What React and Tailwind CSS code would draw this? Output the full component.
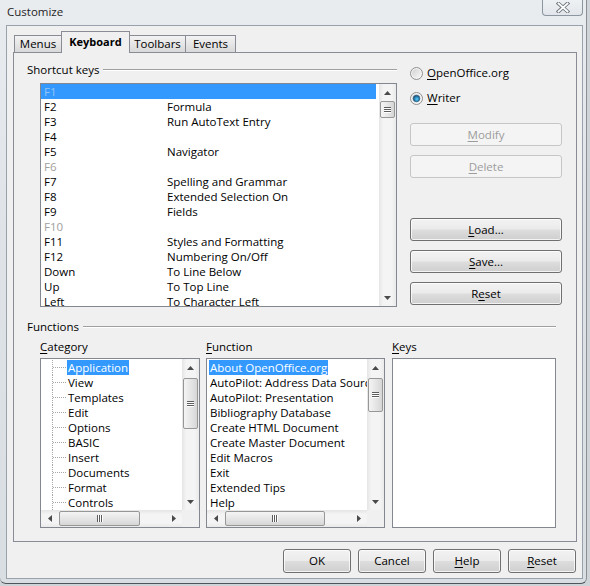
import React from "react";

const U = ({ children }) => <span className="underline decoration-1 underline-offset-[2px]">{children}</span>;

const Btn = ({ children, disabled, className = "" }) => (
  <div
    className={
      "flex items-center justify-center rounded-[3px] border leading-none " +
      (disabled
        ? "border-[#c4c6c8] bg-[#f4f4f4] text-[#9c9c9c] "
        : "border-[#707070] bg-[linear-gradient(to_bottom,#f2f2f2_0%,#ebebeb_48%,#dddddd_52%,#cfcfcf_100%)] shadow-[inset_0_0_0_1px_rgba(255,255,255,0.75)] ") +
      className
    }
  >
    {children}
  </div>
);

const TriUp = () => (
  <svg width="7" height="4" viewBox="0 0 7 4"><path d="M0 4 L3.5 0 L7 4 Z" fill="#4a4a4a" /></svg>
);
const TriDown = () => (
  <svg width="7" height="4" viewBox="0 0 7 4"><path d="M0 0 L3.5 4 L7 0 Z" fill="#4a4a4a" /></svg>
);
const TriLeft = () => (
  <svg width="4" height="7" viewBox="0 0 4 7"><path d="M4 0 L0 3.5 L4 7 Z" fill="#4a4a4a" /></svg>
);
const TriRight = () => (
  <svg width="4" height="7" viewBox="0 0 4 7"><path d="M0 0 L4 3.5 L0 7 Z" fill="#4a4a4a" /></svg>
);

const GripH = () => (
  <svg width="7" height="6" viewBox="0 0 7 6">
    <path d="M0 0.5H7M0 2.5H7M0 4.5H7" stroke="#5c5c5c" strokeWidth="1" />
    <path d="M0 1.5H7M0 3.5H7M0 5.5H7" stroke="#ffffff" strokeWidth="1" />
  </svg>
);
const GripV = () => (
  <svg width="6" height="7" viewBox="0 0 6 7">
    <path d="M0.5 0V7M2.5 0V7M4.5 0V7" stroke="#5c5c5c" strokeWidth="1" />
    <path d="M1.5 0V7M3.5 0V7M5.5 0V7" stroke="#ffffff" strokeWidth="1" />
  </svg>
);

const VScroll = ({ thumbTop, thumbH }) => (
  <div className="flex h-full w-[17px] shrink-0 flex-col bg-[linear-gradient(to_right,#e5e5e5,#f4f4f4_25%,#f4f4f4_75%,#eaeaea)]">
    <div className="flex h-[17px] items-center justify-center"><TriUp /></div>
    <div
      className="mx-[1px] flex items-center justify-center rounded-[2px] border border-[#979797] bg-[linear-gradient(to_right,#f4f4f4,#e6e6e6_50%,#d6d6d6)]"
      style={{ marginTop: thumbTop, height: thumbH }}
    >
      <GripH />
    </div>
    <div className="flex-1" />
    <div className="flex h-[17px] items-center justify-center"><TriDown /></div>
  </div>
);

const HScroll = ({ thumbW }) => (
  <div className="flex h-[17px] w-full flex-row bg-[linear-gradient(to_bottom,#e5e5e5,#f4f4f4_25%,#f4f4f4_75%,#eaeaea)]">
    <div className="flex w-[17px] items-center justify-center"><TriLeft /></div>
    <div
      className="my-[1px] ml-[1px] flex items-center justify-center rounded-[2px] border border-[#979797] bg-[linear-gradient(to_bottom,#f4f4f4,#e6e6e6_50%,#d6d6d6)]"
      style={{ width: thumbW }}
    >
      <GripV />
    </div>
    <div className="flex-1" />
    <div className="flex w-[17px] items-center justify-center"><TriRight /></div>
  </div>
);

const Radio = ({ checked }) => (
  <svg width="13" height="13" viewBox="0 0 13 13">
    <defs>
      <linearGradient id={checked ? "rgc" : "rgu"} x1="0" y1="0" x2="1" y2="1">
        <stop offset="0" stopColor="#d2d2d2" />
        <stop offset="1" stopColor="#f8f8f8" />
      </linearGradient>
      <radialGradient id="dot" cx="0.55" cy="0.6" r="0.6">
        <stop offset="0" stopColor="#5ed0f5" />
        <stop offset="0.5" stopColor="#2a8bc0" />
        <stop offset="1" stopColor="#1a4d72" />
      </radialGradient>
    </defs>
    <circle cx="6.5" cy="6.5" r="6" fill="#f4f4f4" stroke="#8e8f8f" strokeWidth="1" />
    <circle cx="6.5" cy="6.5" r="4.5" fill={checked ? "url(#rgc)" : "url(#rgu)"} />
    {checked && <circle cx="6.5" cy="6.5" r="3.3" fill="url(#dot)" stroke="#1d4c6e" strokeWidth="0.6" />}
  </svg>
);

const GroupHeader = ({ label, className = "" }) => (
  <div className={"flex h-[14px] items-center " + className}>
    <span className="whitespace-nowrap leading-none">{label}</span>
    <div className="ml-[4px] h-[2px] flex-1 border-t border-b border-t-[#a0a0a0] border-b-white" />
  </div>
);

const shortcuts = [
  ["F1", "", "sel"],
  ["F2", "Formula"],
  ["F3", "Run AutoText Entry"],
  ["F4", ""],
  ["F5", "Navigator"],
  ["F6", "", "dis"],
  ["F7", "Spelling and Grammar"],
  ["F8", "Extended Selection On"],
  ["F9", "Fields"],
  ["F10", "", "dis"],
  ["F11", "Styles and Formatting"],
  ["F12", "Numbering On/Off"],
  ["Down", "To Line Below"],
  ["Up", "To Top Line"],
  ["Left", "To Character Left"],
];

const categories = ["Application", "View", "Templates", "Edit", "Options", "BASIC", "Insert", "Documents", "Format", "Controls"];
const functions = [
  "About OpenOffice.org",
  "AutoPilot: Address Data Source",
  "AutoPilot: Presentation",
  "Bibliography Database",
  "Create HTML Document",
  "Create Master Document",
  "Edit Macros",
  "Exit",
  "Extended Tips",
  "Help",
];

const TreeConn = () => (
  <svg width="15" height="15" viewBox="0 0 15 15" className="shrink-0">
    <path d="M0.5 0V15" stroke="#a8a8a8" strokeDasharray="1 1" />
    <path d="M1 7.5H14" stroke="#a8a8a8" strokeDasharray="1 1" />
  </svg>
);

const CloseGlyph = () => (
  <svg width="14" height="11" viewBox="0 0 14 11">
    <path d="M2.5 1.5 L11.5 9.5 M11.5 1.5 L2.5 9.5" stroke="#6c747d" strokeWidth="3.6" strokeLinecap="square" />
    <path d="M2.5 1.5 L11.5 9.5 M11.5 1.5 L2.5 9.5" stroke="#ffffff" strokeWidth="1.8" strokeLinecap="square" />
  </svg>
);

export default function App() {
  return (
    <div className="h-[586px] w-[590px] overflow-hidden bg-[#cfd4d9] font-['Open_Sans',sans-serif] text-[11.5px] text-black">
      <div className="flex h-[584px] w-[587px] flex-col rounded-b-[6px] border-r border-b border-r-[#8a9096] border-b-[#50565c] bg-[linear-gradient(to_bottom,#e9ecef,#dfe3e8_40%,#d9dee3)]">
        {/* Title bar */}
        <div className="flex h-[25px] items-start justify-between">
          <div className="pl-[7px] pt-[3px] leading-[18px] text-[#1e1e1e]">Customize</div>
          <div className="mr-[3px] flex h-[16px] w-[41px] items-center justify-center rounded-b-[4px] border border-t-0 border-[#8c96a1] bg-[linear-gradient(to_bottom,#eef1f4,#e2e6ea)]">
            <CloseGlyph />
          </div>
        </div>
        {/* Client area */}
        <div className="ml-[6px] flex h-[554px] w-[577px] flex-col border border-[#98a2ac] bg-[#f0f0f0] px-[6px] pt-[5px]">
          {/* Tabs */}
          <div className="flex h-[21px] items-end pl-[1px]">
            <div className="flex h-[17px] w-[47px] items-center justify-center border-t border-l border-[#898c95] bg-[linear-gradient(to_bottom,#f3f3f3,#e6e6e6_50%,#d9d9d9)] leading-none">
              Menus
            </div>
            <div className="relative z-10 -mb-px flex h-[22px] w-[69px] items-center justify-center border-t border-l border-r border-[#898c95] bg-[#f0f0f0] pb-[2px] text-[11px] font-bold leading-none">
              Keyboard
            </div>
            <div className="flex h-[17px] w-[56px] items-center justify-center border-t border-r border-[#898c95] bg-[linear-gradient(to_bottom,#f3f3f3,#e6e6e6_50%,#d9d9d9)] leading-none">
              Toolbars
            </div>
            <div className="flex h-[17px] w-[50px] items-center justify-center border-t border-r border-[#898c95] bg-[linear-gradient(to_bottom,#f3f3f3,#e6e6e6_50%,#d9d9d9)] leading-none">
              Events
            </div>
          </div>
          {/* Tab panel */}
          <div className="flex h-[490px] w-[564px] flex-col border border-[#898c95] bg-[#f0f0f0] pl-[13px] pt-[10px]">
            {/* Top section */}
            <div className="flex">
              <div className="flex w-[370px] flex-col">
                <GroupHeader label="Shortcut keys" />
                <div className="ml-[13px] mt-[6px] flex h-[224px] w-[357px] border border-[#828790] bg-white">
                  <div className="flex-1 overflow-hidden">
                    {shortcuts.map(([k, f, s]) => (
                      <div
                        key={k}
                        className={
                          "flex h-[15px] items-center whitespace-nowrap pl-[3px] leading-[15px] " +
                          (s === "sel" ? "mr-[3px] bg-[#3399ff] text-[#94c4f4]" : s === "dis" ? "text-[#a0a0a0]" : "")
                        }
                      >
                        <span className="w-[123px] shrink-0">{k}</span>
                        <span>{f}</span>
                      </div>
                    ))}
                  </div>
                  <VScroll thumbTop={0} thumbH={17} />
                </div>
              </div>
              <div className="ml-[13px] flex w-[152px] flex-col">
                <div className="mt-[3px] flex h-[14px] items-center">
                  <Radio />
                  <span className="ml-[4px] leading-none"><U>O</U>penOffice.org</span>
                </div>
                <div className="mt-[11px] flex h-[14px] items-center">
                  <Radio checked />
                  <span className="ml-[4px] leading-none"><U>W</U>riter</span>
                </div>
                <Btn disabled className="mt-[18px] h-[23px]"><span><U>M</U>odify</span></Btn>
                <Btn disabled className="mt-[9px] h-[23px]"><span><U>D</U>elete</span></Btn>
                <Btn className="mt-[40px] h-[23px]"><span><U>L</U>oad...</span></Btn>
                <Btn className="mt-[9px] h-[23px]"><span><U>S</U>ave...</span></Btn>
                <Btn className="mt-[9px] h-[23px]"><span>R<U>e</U>set</span></Btn>
              </div>
            </div>
            {/* Functions */}
            <GroupHeader label="Functions" className="mt-[13px] w-[529px]" />
            <div className="mt-[6px] flex">
              {/* Category */}
              <div className="ml-[13px] flex w-[160px] flex-col">
                <div className="flex h-[14px] items-center leading-none"><span><U>C</U>ategory</span></div>
                <div className="mt-[4px] flex h-[170px] flex-col border border-[#828790] bg-white">
                  <div className="flex h-[151px]">
                    <div className="flex-1 overflow-hidden pt-px">
                      {categories.map((c, i) => (
                        <div key={c} className="flex h-[15px] items-center whitespace-nowrap pl-[11px] leading-[15px]">
                          <TreeConn />
                          <span className={"px-[1px] " + (i === 0 ? "bg-[#3399ff] text-white" : "")}>{c}</span>
                        </div>
                      ))}
                    </div>
                    <VScroll thumbTop={2} thumbH={51} />
                  </div>
                  <div className="flex h-[17px]">
                    <div className="flex-1"><HScroll thumbW={81} /></div>
                    <div className="w-[17px] bg-[#f0f0f0]" />
                  </div>
                </div>
              </div>
              {/* Function */}
              <div className="ml-[6px] flex w-[179px] flex-col">
                <div className="flex h-[14px] items-center leading-none"><span><U>F</U>unction</span></div>
                <div className="mt-[4px] flex h-[170px] flex-col border border-[#828790] bg-white">
                  <div className="flex h-[151px]">
                    <div className="flex-1 overflow-hidden pt-px pl-[2px]">
                      {functions.map((f, i) => (
                        <div key={f} className="flex h-[15px] items-center whitespace-nowrap leading-[15px]">
                          <span className={"px-[1px] " + (i === 0 ? "bg-[#3399ff] text-white" : "")}>{f}</span>
                        </div>
                      ))}
                    </div>
                    <VScroll thumbTop={2} thumbH={34} />
                  </div>
                  <div className="flex h-[17px]">
                    <div className="flex-1"><HScroll thumbW={100} /></div>
                    <div className="w-[17px] bg-[#f0f0f0]" />
                  </div>
                </div>
              </div>
              {/* Keys */}
              <div className="ml-[7px] flex w-[164px] flex-col">
                <div className="flex h-[14px] items-center leading-none"><span><U>K</U>eys</span></div>
                <div className="mt-[4px] h-[170px] border border-[#828790] bg-white" />
              </div>
            </div>
          </div>
          {/* Bottom buttons */}
          <div className="mt-[7px] flex justify-end gap-[7px]">
            <Btn className="h-[24px] w-[68px]">OK</Btn>
            <Btn className="h-[24px] w-[68px]">Cancel</Btn>
            <Btn className="h-[24px] w-[68px]"><span><U>H</U>elp</span></Btn>
            <Btn className="h-[24px] w-[68px]"><span><U>R</U>eset</span></Btn>
          </div>
        </div>
      </div>
    </div>
  );
}
